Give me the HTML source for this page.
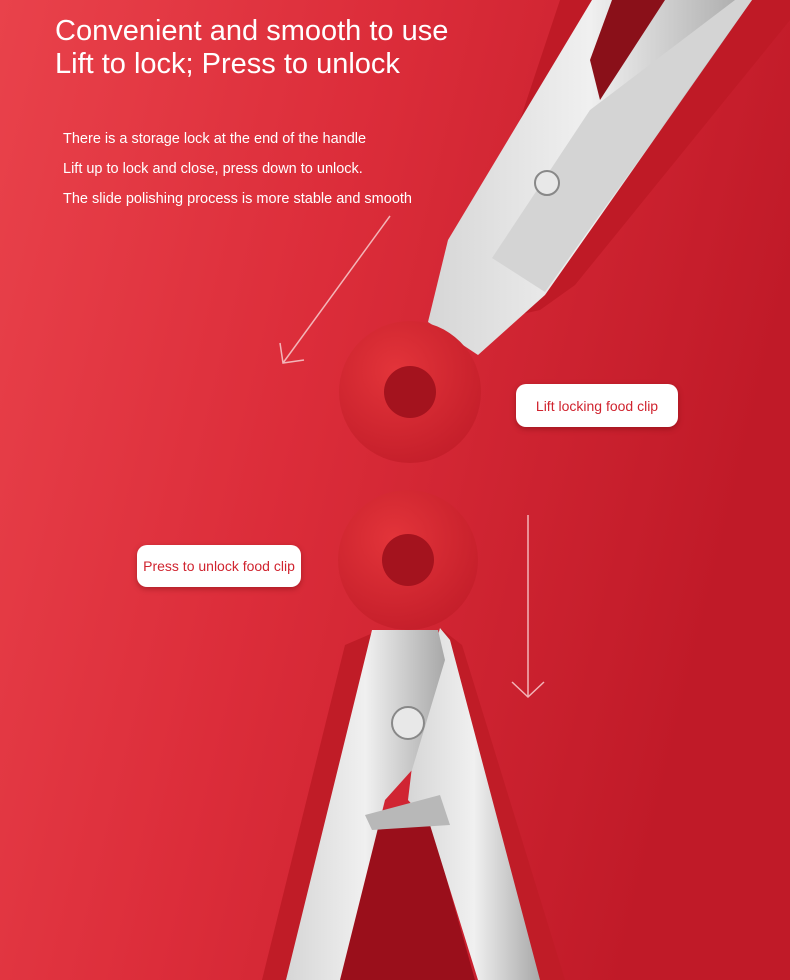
<!DOCTYPE html>
<html><head><meta charset="utf-8"><style>
html,body{margin:0;padding:0}
body{width:790px;height:980px;overflow:hidden;position:relative;font-family:"Liberation Sans",sans-serif}
.t{position:absolute;color:#fff;white-space:nowrap}
.lbl{position:absolute;background:#fff;border-radius:10px;color:#d0242f;font-size:14px;display:flex;align-items:center;justify-content:center;box-shadow:0 2px 6px rgba(80,0,0,.35)}
</style></head><body>
<svg width="790" height="980" style="position:absolute;left:0;top:0">
<defs>
<linearGradient id="bg" x1="0" y1="0" x2="1" y2="0.3">
<stop offset="0" stop-color="#e9424b"/><stop offset="0.45" stop-color="#dc2d3a"/><stop offset="1" stop-color="#c01a28"/></linearGradient>
<linearGradient id="st" x1="0" y1="0" x2="1" y2="0">
<stop offset="0" stop-color="#d6d6d6"/><stop offset="0.5" stop-color="#f0f0f0"/><stop offset="1" stop-color="#a8a8a8"/></linearGradient>
<radialGradient id="rg" cx="0.4" cy="0.35" r="0.7"><stop offset="0" stop-color="#e3343a"/><stop offset="1" stop-color="#c41e2a"/></radialGradient>
</defs>
<rect width="790" height="980" fill="url(#bg)"/>
<polygon points="560,0 790,0 790,20 575,285 540,310 450,330" fill="#bf1a26"/>
<polygon points="592,0 752,0 545,295 478,355 428,322 448,240" fill="url(#st)"/>
<polygon points="612,0 665,0 600,100 590,60" fill="#8a1019"/>
<polygon points="590,110 735,0 752,0 545,292 492,258" fill="#d4d4d4"/>
<circle cx="547" cy="183" r="12" fill="#e8e8e8" stroke="#888" stroke-width="2"/>
<circle cx="410" cy="392" r="71" fill="url(#rg)"/>
<circle cx="410" cy="392" r="26" fill="#a4131e"/>
<circle cx="408" cy="560" r="70" fill="url(#rg)"/>
<circle cx="408" cy="560" r="26" fill="#a4131e"/>
<polygon points="345,645 380,630 340,980 262,980" fill="#c01c27"/>
<polygon points="440,628 462,645 565,980 500,980" fill="#c01c27"/>
<polygon points="340,980 475,980 430,820 380,820" fill="#9a0f1b"/>
<polygon points="440,628 450,640 540,980 478,980 430,825 408,800 420,700" fill="url(#st)"/>
<polygon points="372,630 438,630 445,660 412,770 385,800 340,980 286,980" fill="url(#st)"/>
<polygon points="365,815 440,795 450,825 372,830" fill="#b8b8b8"/>
<circle cx="408" cy="723" r="16" fill="#e8e8e8" stroke="#888" stroke-width="2"/>
<g stroke="#f3b5b8" stroke-width="1.5" fill="none">
<line x1="390" y1="216" x2="283" y2="363"/>
<polyline points="280,343 283,363 304,360"/>
<line x1="528" y1="515" x2="528" y2="697"/>
<polyline points="512,682 528,697 544,682"/>
</g>
</svg>
<div class="t" style="left:55px;top:15px;font-size:29px;line-height:33px">Convenient and smooth to use<br>Lift to lock; Press to unlock</div>
<div class="t" style="left:63px;top:131px;font-size:14.5px">There is a storage lock at the end of the handle</div>
<div class="t" style="left:63px;top:161px;font-size:14.5px">Lift up to lock and close, press down to unlock.</div>
<div class="t" style="left:63px;top:191px;font-size:14.5px">The slide polishing process is more stable and smooth</div>
<div class="lbl" style="left:516px;top:384px;width:162px;height:43px">Lift locking food clip</div>
<div class="lbl" style="left:137px;top:545px;width:164px;height:42px">Press to unlock food clip</div>
</body></html>
